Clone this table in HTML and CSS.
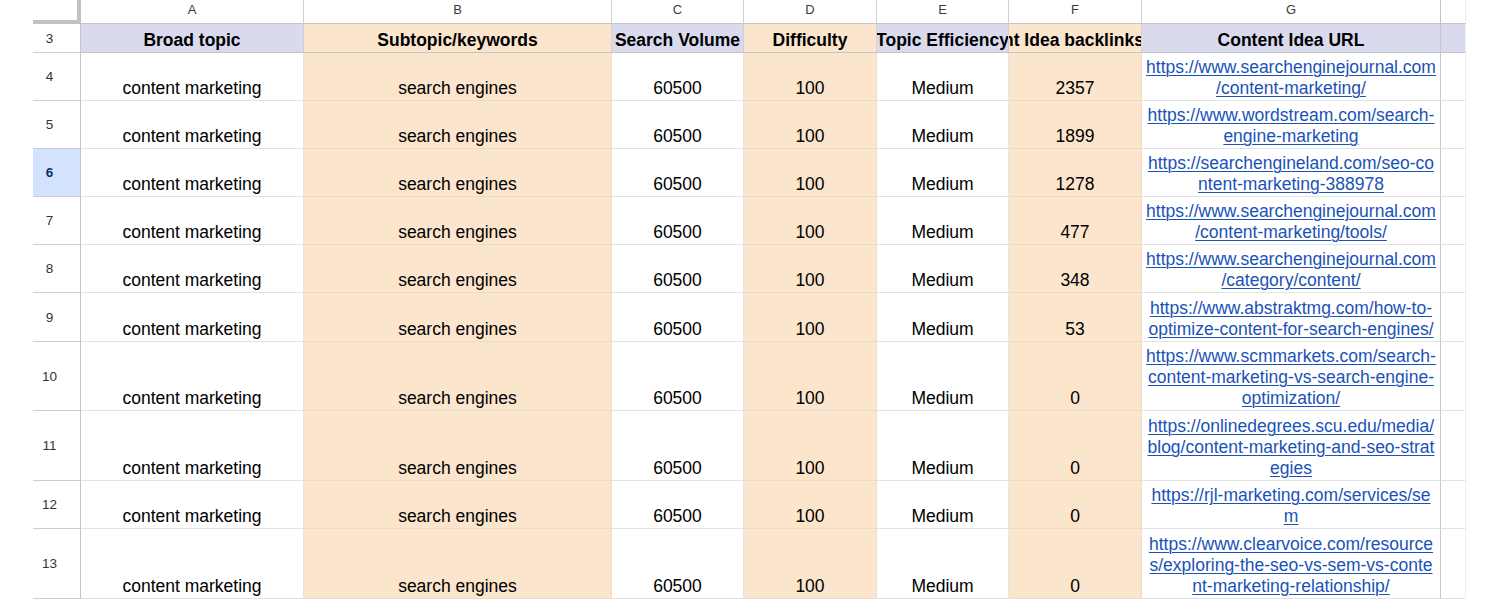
FILE: index.html
```html
<!DOCTYPE html>
<html>
<head>
<meta charset="utf-8">
<link rel="stylesheet" href="styles.css">
</head>
<body>
<div class="wrap">
<div class="sheet">
  <div class="corner"></div>
  <div class="ch">A</div><div class="ch">B</div><div class="ch">C</div><div class="ch">D</div><div class="ch">E</div><div class="ch">F</div><div class="ch ch-g">G</div><div class="ch ch-h"></div>

  <div class="rh">3</div>
  <div class="c hd"><span class="t">Broad topic</span></div>
  <div class="c hd o"><span class="t">Subtopic/keywords</span></div>
  <div class="c hd"><span class="t">Search Volume</span></div>
  <div class="c hd o"><span class="t">Difficulty</span></div>
  <div class="c hd"><span class="t">Topic Efficiency</span></div>
  <div class="c hd o end"><span class="t shift">Content Idea backlinks</span></div>
  <div class="c hd g"><span class="t">Content Idea URL</span></div>
  <div class="c hd h"></div>

  <div class="rh">4</div>
  <div class="c">content marketing</div><div class="c o">search engines</div><div class="c">60500</div><div class="c o">100</div><div class="c">Medium</div><div class="c o">2357</div>
  <div class="c g"><a class="lnk" href="#">https://www.searchenginejournal.com<br>/content-marketing/</a></div><div class="c h"></div>

  <div class="rh">5</div>
  <div class="c">content marketing</div><div class="c o">search engines</div><div class="c">60500</div><div class="c o">100</div><div class="c">Medium</div><div class="c o">1899</div>
  <div class="c g"><a class="lnk" href="#">https://www.wordstream.com/search-<br>engine-marketing</a></div><div class="c h"></div>

  <div class="rh sel">6</div>
  <div class="c">content marketing</div><div class="c o">search engines</div><div class="c">60500</div><div class="c o">100</div><div class="c">Medium</div><div class="c o">1278</div>
  <div class="c g"><a class="lnk" href="#">https://searchengineland.com/seo-co<br>ntent-marketing-388978</a></div><div class="c h"></div>

  <div class="rh">7</div>
  <div class="c">content marketing</div><div class="c o">search engines</div><div class="c">60500</div><div class="c o">100</div><div class="c">Medium</div><div class="c o">477</div>
  <div class="c g"><a class="lnk" href="#">https://www.searchenginejournal.com<br>/content-marketing/tools/</a></div><div class="c h"></div>

  <div class="rh">8</div>
  <div class="c">content marketing</div><div class="c o">search engines</div><div class="c">60500</div><div class="c o">100</div><div class="c">Medium</div><div class="c o">348</div>
  <div class="c g"><a class="lnk" href="#">https://www.searchenginejournal.com<br>/category/content/</a></div><div class="c h"></div>

  <div class="rh">9</div>
  <div class="c">content marketing</div><div class="c o">search engines</div><div class="c">60500</div><div class="c o">100</div><div class="c">Medium</div><div class="c o">53</div>
  <div class="c g"><a class="lnk" href="#">https://www.abstraktmg.com/how-to-<br>optimize-content-for-search-engines/</a></div><div class="c h"></div>

  <div class="rh">10</div>
  <div class="c">content marketing</div><div class="c o">search engines</div><div class="c">60500</div><div class="c o">100</div><div class="c">Medium</div><div class="c o">0</div>
  <div class="c g"><a class="lnk" href="#">https://www.scmmarkets.com/search-<br>content-marketing-vs-search-engine-<br>optimization/</a></div><div class="c h"></div>

  <div class="rh">11</div>
  <div class="c">content marketing</div><div class="c o">search engines</div><div class="c">60500</div><div class="c o">100</div><div class="c">Medium</div><div class="c o">0</div>
  <div class="c g"><a class="lnk" href="#">https://onlinedegrees.scu.edu/media/<br>blog/content-marketing-and-seo-strat<br>egies</a></div><div class="c h"></div>

  <div class="rh">12</div>
  <div class="c">content marketing</div><div class="c o">search engines</div><div class="c">60500</div><div class="c o">100</div><div class="c">Medium</div><div class="c o">0</div>
  <div class="c g"><a class="lnk" href="#">https://rjl-marketing.com/services/se<br>m</a></div><div class="c h"></div>

  <div class="rh">13</div>
  <div class="c">content marketing</div><div class="c o">search engines</div><div class="c">60500</div><div class="c o">100</div><div class="c">Medium</div><div class="c o">0</div>
  <div class="c g"><a class="lnk" href="#">https://www.clearvoice.com/resource<br>s/exploring-the-seo-vs-sem-vs-conte<br>nt-marketing-relationship/</a></div><div class="c h"></div>
</div>
</div>
</body>
</html>
```

FILE: styles.css
```css
html, body {
  margin: 0;
  padding: 0;
  background: #ffffff;
}

.wrap {
  padding-left: 33px;
  font-family: "Liberation Sans", Arial, sans-serif;
  color: #000;
}

.sheet {
  display: grid;
  grid-template-columns: 48px 223px 308px 132px 133px 132px 133px 299px 25px;
  grid-template-rows: 24px 29px 48px 48px 48px 48px 48px 49px 69px 70px 48px 70px;
  width: max-content;
}

.sheet > div {
  box-sizing: border-box;
  min-width: 0;
}

.corner {
  background: #ffffff;
  border-right: 4px solid #c2c2c2;
  border-bottom: 4px solid #c2c2c2;
}

.ch {
  display: flex;
  align-items: center;
  justify-content: center;
  font-size: 13px;
  color: #3c3c3c;
  border-right: 1px solid #d2d2d2;
  border-bottom: 1px solid #c6c6c6;
  padding-bottom: 4px;
  background: #ffffff;
}

.ch-g {
  border-right-color: #c4c4c4;
}

.ch-h {
  border-right-color: #ececec;
}

.rh {
  display: flex;
  align-items: center;
  justify-content: center;
  padding-right: 14px;
  font-size: 13.5px;
  color: #333;
  background: #ffffff;
  border-right: 1px solid #c4c4c4;
  border-bottom: 1px solid #cdcdcd;
}

.rh.sel {
  background: #d3e3fd;
  color: #0a2d66;
  font-weight: bold;
}

.c {
  display: flex;
  align-items: flex-end;
  justify-content: center;
  overflow: hidden;
  white-space: nowrap;
  font-size: 17.5px;
  line-height: 21px;
  padding-bottom: 1px;
  text-align: center;
  background: #ffffff;
  border-right: 1px solid #e4e4e4;
  border-bottom: 1px solid #e2e2e2;
}

.c.o {
  background: #fce5cd;
  border-right-color: #ecdccb;
  border-bottom-color: #eadccd;
}

.c.hd {
  background: #dadaef;
  font-weight: bold;
  border-bottom: 1px solid #c4c4cc;
  border-right-color: #cfcfdc;
}

.c.hd.o {
  background: #fce5cd;
  border-right-color: #dcd0c4;
}

.c.end {
  justify-content: flex-end;
}

.c .t {
  flex: none;
}

.c .t.shift {
  margin-right: -3px;
}

.c.g {
  border-right-color: #c8c8c8;
}

.c.h {
  border-right-color: #eeeeee;
}

.lnk {
  color: #1a52b8;
  text-decoration: underline;
  text-underline-offset: 2px;
  text-decoration-thickness: 1px;
}
```
